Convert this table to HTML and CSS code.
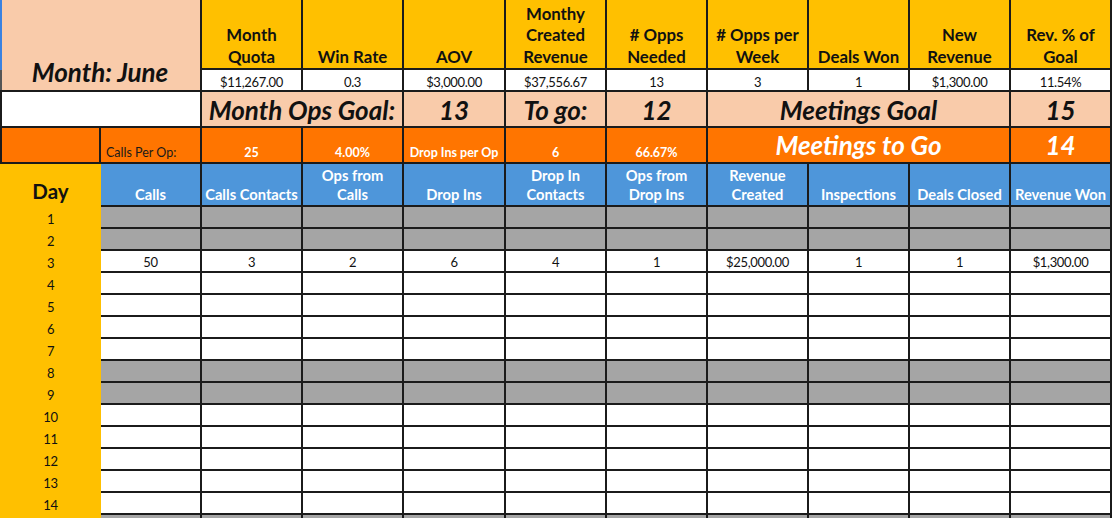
FILE: index.html
```html
<!DOCTYPE html>
<html>
<head>
<meta charset="utf-8">
<link rel="stylesheet" href="styles.css">
</head>
<body>
<div class="sheet">
  <div class="c month">Month: June</div>
  <div class="c hd">Month<br>Quota</div>
  <div class="c hd">Win Rate</div>
  <div class="c hd">AOV</div>
  <div class="c hd">Monthy<br>Created<br>Revenue</div>
  <div class="c hd"># Opps<br>Needed</div>
  <div class="c hd"># Opps per<br>Week</div>
  <div class="c hd">Deals Won</div>
  <div class="c hd">New<br>Revenue</div>
  <div class="c hd">Rev. % of<br>Goal</div>

  <div class="c val">$11,267.00</div>
  <div class="c val">0.3</div>
  <div class="c val">$3,000.00</div>
  <div class="c val">$37,556.67</div>
  <div class="c val">13</div>
  <div class="c val">3</div>
  <div class="c val">1</div>
  <div class="c val">$1,300.00</div>
  <div class="c val">11.54%</div>

  <div class="c blank span2 edge"></div>
  <div class="c pk span2">Month Ops Goal:</div>
  <div class="c pk">13</div>
  <div class="c pk">To go:</div>
  <div class="c pk">12</div>
  <div class="c pk span3">Meetings Goal</div>
  <div class="c pk">15</div>

  <div class="c or edge"></div>
  <div class="c or lbl">Calls Per Op:</div>
  <div class="c or">25</div>
  <div class="c or">4.00%</div>
  <div class="c or">Drop Ins per Op</div>
  <div class="c or">6</div>
  <div class="c or">66.67%</div>
  <div class="c or big span3">Meetings to Go</div>
  <div class="c or big">14</div>

  <div class="day daylbl">Day</div>
  <div class="c bl">Calls</div>
  <div class="c bl">Calls Contacts</div>
  <div class="c bl">Ops from<br>Calls</div>
  <div class="c bl">Drop Ins</div>
  <div class="c bl">Drop In<br>Contacts</div>
  <div class="c bl">Ops from<br>Drop Ins</div>
  <div class="c bl">Revenue<br>Created</div>
  <div class="c bl">Inspections</div>
  <div class="c bl">Deals Closed</div>
  <div class="c bl">Revenue Won</div>

  <div class="day">1</div>
  <div class="c g"></div><div class="c g"></div><div class="c g"></div><div class="c g"></div><div class="c g"></div><div class="c g"></div><div class="c g"></div><div class="c g"></div><div class="c g"></div><div class="c g"></div>
  <div class="day">2</div>
  <div class="c g"></div><div class="c g"></div><div class="c g"></div><div class="c g"></div><div class="c g"></div><div class="c g"></div><div class="c g"></div><div class="c g"></div><div class="c g"></div><div class="c g"></div>
  <div class="day">3</div>
  <div class="c d">50</div><div class="c d">3</div><div class="c d">2</div><div class="c d">6</div><div class="c d">4</div><div class="c d">1</div><div class="c d">$25,000.00</div><div class="c d">1</div><div class="c d">1</div><div class="c d">$1,300.00</div>
  <div class="day">4</div>
  <div class="c d"></div><div class="c d"></div><div class="c d"></div><div class="c d"></div><div class="c d"></div><div class="c d"></div><div class="c d"></div><div class="c d"></div><div class="c d"></div><div class="c d"></div>
  <div class="day">5</div>
  <div class="c d"></div><div class="c d"></div><div class="c d"></div><div class="c d"></div><div class="c d"></div><div class="c d"></div><div class="c d"></div><div class="c d"></div><div class="c d"></div><div class="c d"></div>
  <div class="day">6</div>
  <div class="c d"></div><div class="c d"></div><div class="c d"></div><div class="c d"></div><div class="c d"></div><div class="c d"></div><div class="c d"></div><div class="c d"></div><div class="c d"></div><div class="c d"></div>
  <div class="day">7</div>
  <div class="c d"></div><div class="c d"></div><div class="c d"></div><div class="c d"></div><div class="c d"></div><div class="c d"></div><div class="c d"></div><div class="c d"></div><div class="c d"></div><div class="c d"></div>
  <div class="day">8</div>
  <div class="c g"></div><div class="c g"></div><div class="c g"></div><div class="c g"></div><div class="c g"></div><div class="c g"></div><div class="c g"></div><div class="c g"></div><div class="c g"></div><div class="c g"></div>
  <div class="day">9</div>
  <div class="c g"></div><div class="c g"></div><div class="c g"></div><div class="c g"></div><div class="c g"></div><div class="c g"></div><div class="c g"></div><div class="c g"></div><div class="c g"></div><div class="c g"></div>
  <div class="day">10</div>
  <div class="c d"></div><div class="c d"></div><div class="c d"></div><div class="c d"></div><div class="c d"></div><div class="c d"></div><div class="c d"></div><div class="c d"></div><div class="c d"></div><div class="c d"></div>
  <div class="day">11</div>
  <div class="c d"></div><div class="c d"></div><div class="c d"></div><div class="c d"></div><div class="c d"></div><div class="c d"></div><div class="c d"></div><div class="c d"></div><div class="c d"></div><div class="c d"></div>
  <div class="day">12</div>
  <div class="c d"></div><div class="c d"></div><div class="c d"></div><div class="c d"></div><div class="c d"></div><div class="c d"></div><div class="c d"></div><div class="c d"></div><div class="c d"></div><div class="c d"></div>
  <div class="day">13</div>
  <div class="c d"></div><div class="c d"></div><div class="c d"></div><div class="c d"></div><div class="c d"></div><div class="c d"></div><div class="c d"></div><div class="c d"></div><div class="c d"></div><div class="c d"></div>
  <div class="day">14</div>
  <div class="c d"></div><div class="c d"></div><div class="c d"></div><div class="c d"></div><div class="c d"></div><div class="c d"></div><div class="c d"></div><div class="c d"></div><div class="c d"></div><div class="c d"></div>
  <div class="day"></div>
  <div class="c g"></div><div class="c g"></div><div class="c g"></div><div class="c g"></div><div class="c g"></div><div class="c g"></div><div class="c g"></div><div class="c g"></div><div class="c g"></div><div class="c g"></div>
</div>
</body>
</html>
```
FILE: styles.css
```css
html, body {
  margin: 0;
  padding: 0;
  background: #ffffff;
  overflow: hidden;
}
body {
  font-family: Lato, "Open Sans", sans-serif;
  color: #111;
  width: 1117px;
  height: 518px;
}
.sheet {
  display: grid;
  grid-template-columns: 101px 101px 101px 101px 102px 101px 101px 101px 101px 101px 101px;
  grid-template-rows: 70px 22px 36px 36px 43px repeat(15, 22px);
  width: 1112px;
}
.c {
  box-sizing: border-box;
  border-right: 2px solid #1b1b1b;
  border-bottom: 2px solid #1b1b1b;
  display: flex;
  align-items: flex-end;
  justify-content: center;
  text-align: center;
  white-space: nowrap;
  overflow: visible;
}
.span2 { grid-column: span 2; }
.span3 { grid-column: span 3; }
.edge { border-left: 2px solid #1b1b1b; }

.month {
  grid-column: span 2;
  grid-row: span 2;
  background-color: #f9cbaa;
  background-image: linear-gradient(to bottom, #3a82e0 70px, #555 70px);
  background-size: 2px 100%;
  background-repeat: no-repeat;
  font-weight: 700;
  font-style: italic;
  font-size: 26px;
  line-height: 30px;
  padding-bottom: 3px;
}
.hd {
  background: #ffc000;
  font-weight: 700;
  font-size: 16.8px;
  line-height: 21.5px;
  padding-bottom: 1px;
}
.val {
  background: #ffffff;
  font-size: 13px;
  letter-spacing: -0.35px;
  line-height: 16px;
}
.blank { background: #ffffff; }
.pk {
  background: #f9cbaa;
  font-weight: 700;
  font-style: italic;
  font-size: 26px;
  line-height: 30px;
  padding-bottom: 1px;
}
.or {
  background: #ff7500;
  color: #ffffff;
  font-weight: 700;
  font-size: 12.5px;
  line-height: 16px;
  padding-bottom: 1px;
}
.or.lbl {
  color: #1a1a1a;
  font-weight: 400;
  justify-content: flex-start;
  padding-left: 5px;
}
.or.big {
  font-style: italic;
  font-size: 26px;
  line-height: 30px;
  padding-bottom: 2px;
}
.bl {
  background: #4e96da;
  color: #ffffff;
  font-weight: 700;
  font-size: 14.7px;
  line-height: 19px;
  padding-bottom: 1px;
}
.day {
  background: #ffc000;
  display: flex;
  align-items: flex-end;
  justify-content: center;
  font-size: 13px;
  letter-spacing: -0.3px;
  line-height: 16px;
  padding-bottom: 2px;
  box-sizing: border-box;
}
.daylbl {
  font-weight: 700;
  font-size: 20.5px;
  letter-spacing: 0;
  line-height: 24px;
  padding-bottom: 4px;
}
.d {
  background: #ffffff;
  font-size: 13px;
  letter-spacing: -0.35px;
  line-height: 16px;
  padding-bottom: 1px;
}
.g { background: #a5a5a5; }
```
